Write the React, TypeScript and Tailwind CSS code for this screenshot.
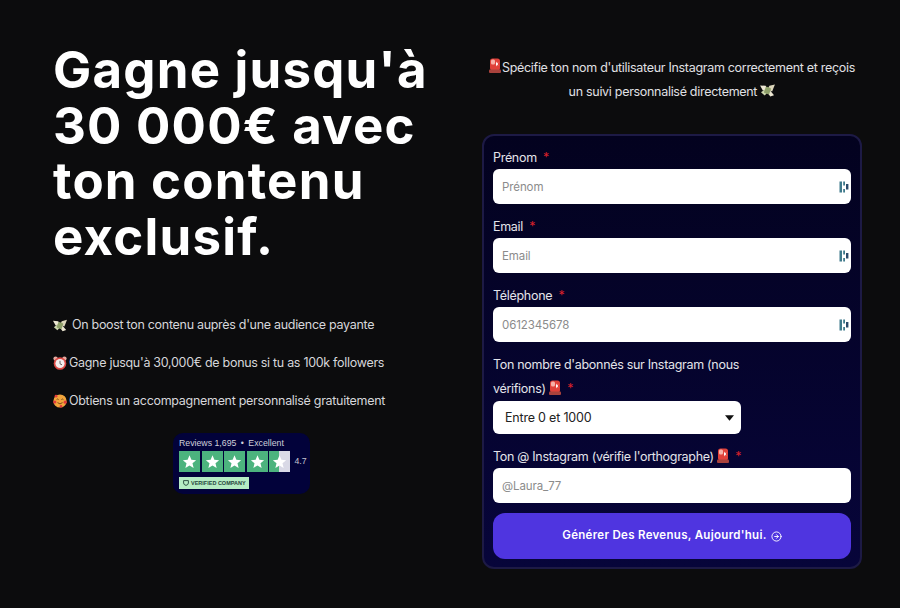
import { CircleArrowRight } from "lucide-react";

const bodyFont = "font-['Inter','Liberation_Sans',sans-serif]";

function PoliceLight({ className = "" }: { className?: string }) {
  return (
    <svg viewBox="0 0 12 15" className={className}>
      <rect x="1" y="0.5" width="10" height="12" rx="2.5" fill="#e0413a" />
      <rect x="2" y="1.5" width="4" height="5" rx="1.5" fill="#f6b0a8" />
      <path d="M7 3.5l1 1.5 1.5-.5-1 1.5 1 1.5-1.5-.5-1 1.5z" fill="#fff" />
      <rect x="0" y="11.5" width="12" height="3.5" rx="1" fill="#a9423c" />
    </svg>
  );
}

function MoneyWings({ className = "" }: { className?: string }) {
  return (
    <svg viewBox="0 0 16 14" className={className}>
      <path d="M0 1.5l6 .5 2 4-5 1z" fill="#ece6d2" />
      <path d="M16 .5L10 2 8 6l5 2z" fill="#ddd6bb" />
      <path d="M1 9l5-4 3 3-4 4.5z" fill="#cfd8ae" />
      <path d="M15 12l-5-6-3 2 4 5.5z" fill="#ece6d2" />
      <rect x="5" y="3.5" width="6" height="7" rx="1" fill="#8fa06a" transform="rotate(20 8 7)" />
    </svg>
  );
}

function AlarmClock({ className = "" }: { className?: string }) {
  return (
    <svg viewBox="0 0 14 14" className={className}>
      <circle cx="2.6" cy="2.6" r="2.2" fill="#e8a9a0" />
      <circle cx="11.4" cy="2.6" r="2.2" fill="#e8a9a0" />
      <circle cx="7" cy="7.5" r="6.3" fill="#dc4a45" />
      <circle cx="7" cy="7.5" r="4.6" fill="#f3eeee" />
      <path d="M7 4.8v3l2 1" stroke="#555" strokeWidth="0.9" fill="none" />
    </svg>
  );
}

function HeartsFace({ className = "" }: { className?: string }) {
  return (
    <svg viewBox="0 0 14 14" className={className}>
      <circle cx="7" cy="7" r="6.6" fill="#f2a53c" />
      <path d="M3.6 5.6q1-1.2 2 0M8.4 5.6q1-1.2 2 0" stroke="#5a3410" strokeWidth="0.8" fill="none" />
      <path d="M4.5 8.6q2.5 2.6 5 0" stroke="#5a3410" strokeWidth="0.8" fill="none" />
      <circle cx="1.8" cy="8" r="1.6" fill="#e23b3b" />
      <circle cx="12.2" cy="8.2" r="1.6" fill="#e23b3b" />
      <circle cx="3" cy="2.2" r="1.4" fill="#e23b3b" />
      <circle cx="8" cy="12.3" r="1.3" fill="#e23b3b" />
    </svg>
  );
}

function ManagerIcon() {
  return (
    <svg viewBox="0 0 10 12" className="absolute right-[2px] top-[12px] h-3 w-[10px]">
      <rect x="0.5" y="0.5" width="2.5" height="11" fill="#3f7a8c" />
      <rect x="4.2" y="0.5" width="1.8" height="4" fill="#3f7a8c" />
      <rect x="4.2" y="8" width="1.8" height="3.5" fill="#3f7a8c" />
      <rect x="7" y="3" width="2.4" height="5.5" fill="#2a4a6a" />
    </svg>
  );
}

function Star() {
  return (
    <svg viewBox="0 0 24 24" className="h-[15px] w-[15px]">
      <path d="M12 2l3 7.2 7.6.6-5.8 5 1.8 7.4L12 18.3l-6.6 3.9 1.8-7.4-5.8-5 7.6-.6z" fill="#fff" />
    </svg>
  );
}

function Trustpilot() {
  return (
    <div className="mx-auto mt-[20px] h-[61px] w-[137px] rounded-[10px] bg-[#02023a] pl-[6px] pt-[4px] font-['Liberation_Sans',sans-serif]">
      <div className="text-[8.75px] leading-[13px] text-[#d0d0da]">
        Reviews 1,695 <span className="mx-[2px]">•</span> Excellent
      </div>
      <div className="mt-[1px] flex items-center gap-[1.5px]">
        {[0, 1, 2, 3].map((i) => (
          <div key={i} className="flex h-[21px] w-[21px] items-center justify-center bg-[#4cb37e]">
            <Star />
          </div>
        ))}
        <div className="flex h-[21px] w-[21px] items-center justify-center bg-[linear-gradient(90deg,#4cb37e_50%,#d9d9e6_50%)]">
          <Star />
        </div>
        <span className="ml-[3px] text-[8.75px] text-[#c4c4d0]">4.7</span>
      </div>
      <div className="mt-[5px] flex h-[12px] w-[70px] items-center gap-[2px] whitespace-nowrap bg-[#b5ecc4] pl-[4px] text-[5.5px] font-bold text-[#24443a]">
        <svg viewBox="0 0 10 10" className="h-[6px] w-[6px]">
          <path d="M1 1h8v4q0 3-4 4-4-1-4-4z" fill="none" stroke="#24443a" strokeWidth="1.5" />
        </svg>
        VERIFIED COMPANY
      </div>
    </div>
  );
}

function Label({ children }: { children: React.ReactNode }) {
  return <div className="-mb-[1px] pt-[1px] text-[12.5px] leading-[24px] tracking-[-0.3px] text-[#e4e4ea]">{children}</div>;
}

function Req() {
  return <span className="ml-[3px] text-[#d9202a]">*</span>;
}

function Field({ label, placeholder, icon = true }: { label: React.ReactNode; placeholder: string; icon?: boolean }) {
  return (
    <div>
      <Label>{label}</Label>
      <div className="relative h-[35px]">
        <input
          placeholder={placeholder}
          className="h-full w-full rounded-[6px] bg-white pl-[9px] text-[11.5px] tracking-[-0.1px] text-[#333] outline-none placeholder:text-[#8b8b8b]"
        />
        {icon && <ManagerIcon />}
      </div>
    </div>
  );
}

export default function App() {
  return (
    <div className={`h-[608px] w-[900px] overflow-hidden bg-[#0c0c0d] ${bodyFont}`}>
      <div className="flex">
        <div className="w-[482px] pl-[53px] pt-[42px]">
          <h1 className="font-['Inter',sans-serif] text-[51px] font-bold leading-[55.5px] tracking-[1.2px] text-white">
            Gagne jusqu'à
            <br />
            30 000€ avec
            <br />
            ton contenu
            <br />
            exclusif.
          </h1>
          <div className="mt-[49px] flex flex-col gap-[14px] text-[12.5px] leading-[24px] tracking-[-0.3px] text-[#d6d6da]">
            <div className="flex items-center">
              <MoneyWings className="mr-[5px] h-[13px] w-[14px]" />
              On boost ton contenu auprès d'une audience payante
            </div>
            <div className="flex items-center">
              <AlarmClock className="mr-[2px] h-[14px] w-[14px]" />
              Gagne jusqu'à 30,000€ de bonus si tu as 100k followers
            </div>
            <div className="flex items-center">
              <HeartsFace className="mr-[2px] h-[14px] w-[14px]" />
              Obtiens un accompagnement personnalisé gratuitement
            </div>
          </div>
          <div className="w-[377px]">
            <Trustpilot />
          </div>
        </div>

        <div className="w-[380px] pt-[56px]">
          <p className="whitespace-nowrap text-center text-[12.5px] leading-[24px] tracking-[-0.3px] text-[#e0e0e4]">
            <PoliceLight className="mr-[1px] inline-block h-[15px] w-[12px] align-[-1px]" />
            Spécifie ton nom d'utilisateur Instagram correctement et reçois
            <br />
            un suivi personnalisé directement{" "}
            <MoneyWings className="inline-block h-[13px] w-[15px] align-[-1px]" />
          </p>
          <form className="mt-[30px] flex h-[435px] flex-col gap-[10px] rounded-[12px] border-2 border-[#1d1a45] bg-[linear-gradient(180deg,#03021f_0%,#07053a_100%)] px-[9px] pt-[9px]">
            <Field
              label={
                <>
                  Prénom <Req />
                </>
              }
              placeholder="Prénom"
            />
            <Field
              label={
                <>
                  Email <Req />
                </>
              }
              placeholder="Email"
            />
            <Field
              label={
                <>
                  Téléphone <Req />
                </>
              }
              placeholder="0612345678"
            />
            <div>
              <Label>
                Ton nombre d'abonnés sur Instagram (nous
                <br />
                vérifions) <PoliceLight className="inline-block h-[15px] w-[12px] align-[-2px]" /> <Req />
              </Label>
              <div className="relative mt-[1px] h-[33px] w-[248px]">
                <select className="h-full w-full appearance-none rounded-[6px] bg-white pl-[12px] pt-[2px] text-[12.5px] tracking-[-0.2px] text-[#222] outline-none">
                  <option>Entre 0 et 1000</option>
                </select>
                <svg viewBox="0 0 10 6" className="pointer-events-none absolute right-[7px] top-[14px] h-[6px] w-[9px]">
                  <path d="M0 0h10L5 6z" fill="#111" />
                </svg>
              </div>
            </div>
            <Field
              label={
                <>
                  Ton @ Instagram (vérifie l'orthographe){" "}
                  <PoliceLight className="inline-block h-[15px] w-[12px] align-[-2px]" /> <Req />
                </>
              }
              placeholder="@Laura_77"
              icon={false}
            />
            <button
              type="button"
              className="flex h-[46px] items-center justify-center gap-[4px] rounded-[12px] bg-[#4f35e0] text-[11.5px] font-semibold tracking-[0.3px] text-white"
            >
              Générer Des Revenus, Aujourd'hui.
              <CircleArrowRight className="h-[11px] w-[11px]" />
            </button>
          </form>
        </div>
      </div>
    </div>
  );
}
